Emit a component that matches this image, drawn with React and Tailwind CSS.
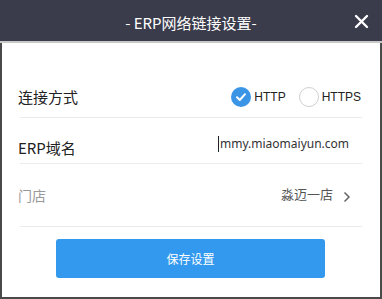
import React, { useState } from 'react';

const font = { fontFamily: '"Noto Sans CJK SC", "Liberation Sans", sans-serif' };

const Radio = ({ checked, label, onClick }) => (
  <button type="button" onClick={onClick} className="flex items-center">
    {checked ? (
      <span className="w-[20px] h-[20px] rounded-full bg-[#3b95e6] flex items-center justify-center">
        <svg width="12" height="12" viewBox="0 0 12 12">
          <path d="M2 6.3 L4.8 9 L10 3.2" fill="none" stroke="#fff" strokeWidth="2" strokeLinecap="round" strokeLinejoin="round" />
        </svg>
      </span>
    ) : (
      <span className="w-[20px] h-[20px] rounded-full border border-[#cfcfcf] bg-white" />
    )}
    <span className="ml-[3px] text-[12px] text-[#222]" style={{ fontFamily: '"Liberation Sans", sans-serif' }}>{label}</span>
  </button>
);

export default function App() {
  const [proto, setProto] = useState('HTTP');
  const [domain, setDomain] = useState('mmy.miaomaiyun.com');

  return (
    <div className="w-[382px] h-[299px] bg-white flex flex-col" style={font}>
      {/* 标题栏 */}
      <div className="h-[41px] bg-[#3a3b4b] flex items-center relative shrink-0">
        <div className="flex-1 text-center text-white text-[15px] leading-none pt-[3px]">- ERP网络链接设置-</div>
        <button type="button" className="absolute right-[13px] top-[14px]">
          <svg width="15" height="15" viewBox="0 0 15 15">
            <path d="M2 2 L13 13 M13 2 L2 13" stroke="#fff" strokeWidth="2.4" strokeLinecap="round" />
          </svg>
        </button>
      </div>
      <div className="h-[2px] bg-[#c8c8c8] shrink-0" />

      {/* 内容 */}
      <div className="flex-1 border-x-2 border-b-2 border-[#4a4a4a] pl-[16px] pr-[18px] flex flex-col">
        <div className="h-[75px] border-b border-[#ececec] flex items-end pb-[9px] ml-[2px]">
          <span className="text-[15px] text-[#222] ml-[-2px]">连接方式</span>
          <div className="ml-auto flex items-center gap-[13px] mb-[1px] mr-[1px]">
            <Radio checked={proto === 'HTTP'} label="HTTP" onClick={() => setProto('HTTP')} />
            <Radio checked={proto === 'HTTPS'} label="HTTPS" onClick={() => setProto('HTTPS')} />
          </div>
        </div>

        <div className="h-[46px] border-b border-[#ececec] flex items-end pb-[4px] ml-[2px]">
          <span className="text-[15px] text-[#222] ml-[-2px]">ERP域名</span>
          <input
            value={domain}
            onChange={(e) => setDomain(e.target.value)}
            className="ml-auto mr-[4px] w-[140px] text-[12px] text-[#333] outline-none mb-[7px] border-l border-[#222] pl-[1px] leading-[16px]"
            style={{ fontFamily: '"Noto Sans", "Liberation Sans", sans-serif' }}
          />
        </div>

        <div className="h-[63px] border-b border-[#ececec] flex items-start pt-[21px] ml-[2px]">
          <span className="text-[14px] text-[#999] ml-[-2px]">门店</span>
          <span className="ml-auto text-[13px] text-[#555] mt-[-1px]">淼迈一店</span>
          <svg className="ml-[10px] mt-[6px]" width="8" height="12" viewBox="0 0 8 12">
            <path d="M1.5 1.5 L6 6 L1.5 10.5" fill="none" stroke="#666" strokeWidth="1.5" />
          </svg>
          <span className="w-[11px]" />
        </div>

        <div className="flex justify-center pt-[12px] pl-[1px]">
          <button type="button" className="w-[269px] h-[39px] rounded-[3px] bg-[#3399ee] text-white text-[12px]">
            保存设置
          </button>
        </div>
      </div>
    </div>
  );
}
